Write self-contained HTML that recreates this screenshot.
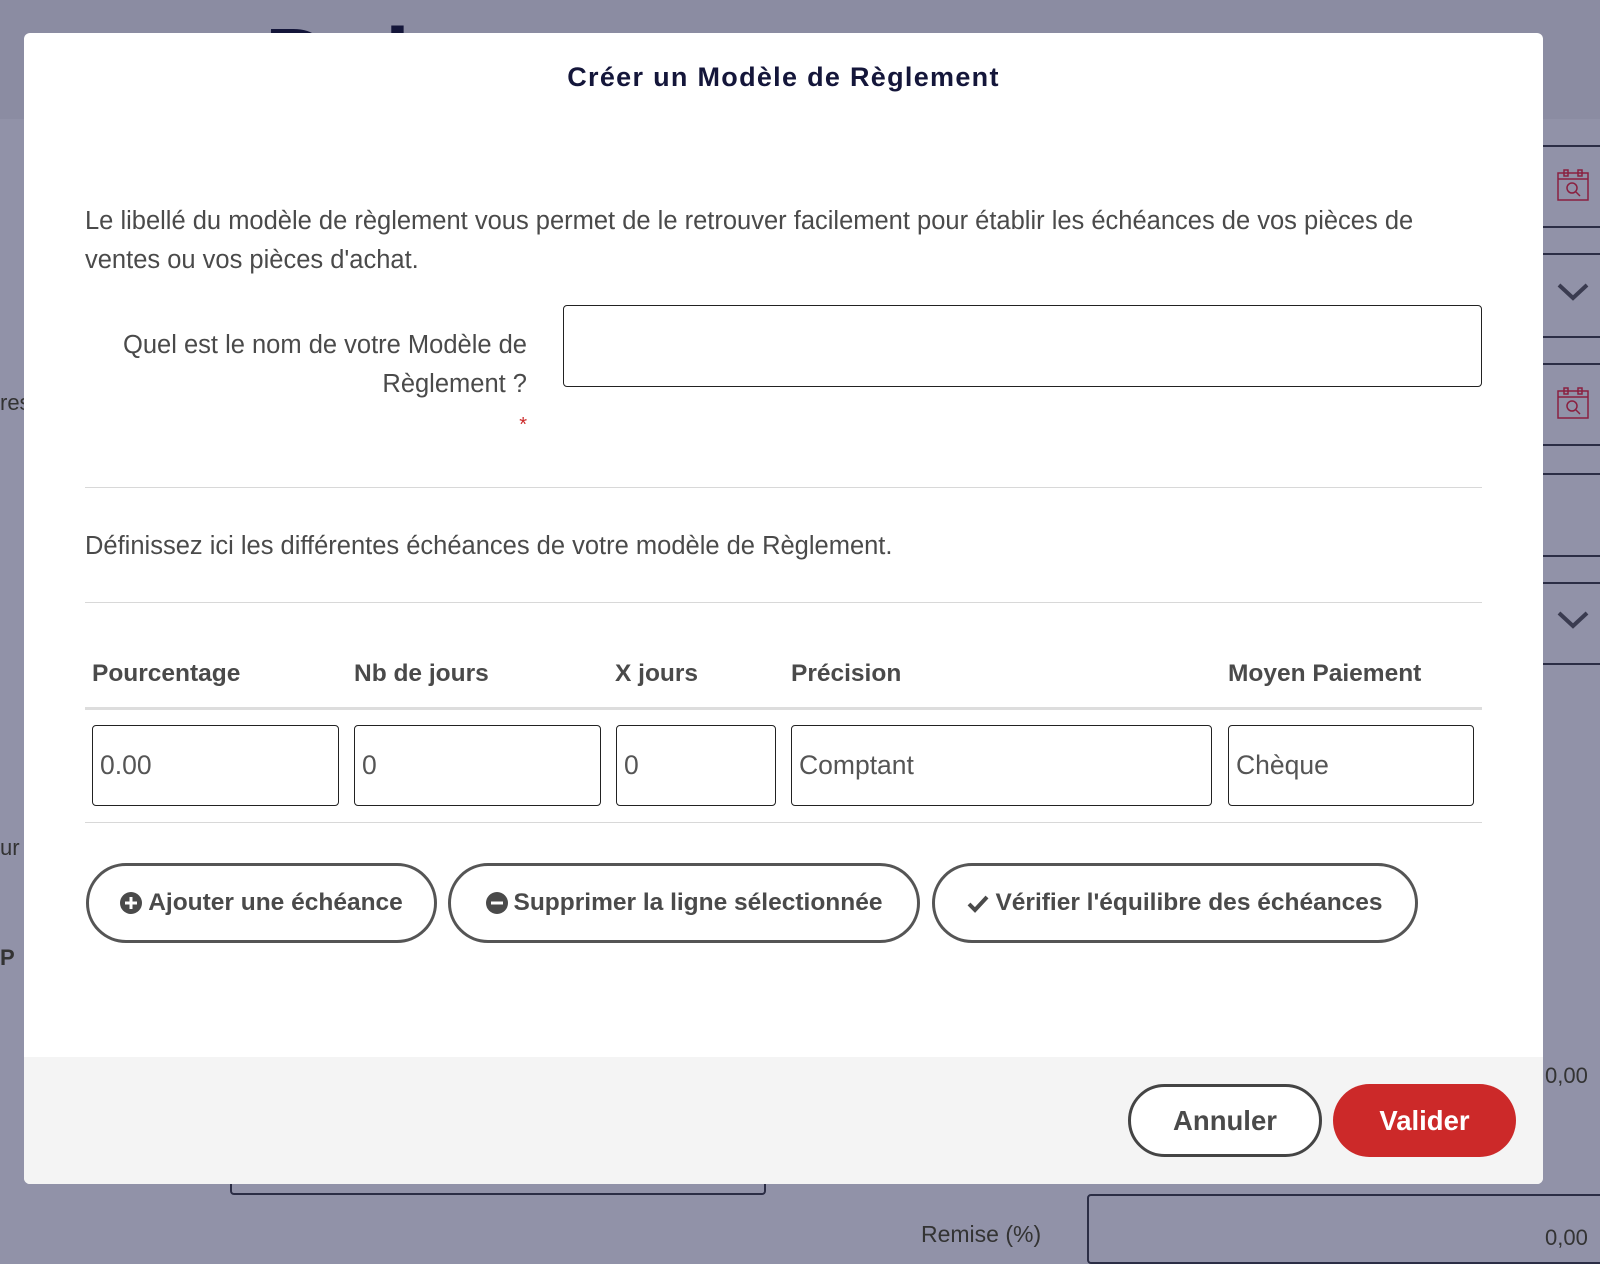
<!DOCTYPE html>
<html><head><meta charset="utf-8"><style>
*{box-sizing:border-box;margin:0;padding:0}
body{width:1600px;height:1254px;background:#9192a8;position:relative;overflow:hidden;font-family:"Liberation Sans",sans-serif;color:#444}
.abs{position:absolute}
.hl{position:absolute;height:2px;background:#2b2d45}
.modal{position:absolute;left:24px;top:33px;width:1519px;height:1151px;background:#fff;border-radius:6px;overflow:hidden}
.title{position:absolute;top:29px;left:0;width:100%;text-align:center;font-weight:bold;font-size:27px;letter-spacing:1.3px;color:#14163a}
.p{position:absolute;font-size:25.5px;color:#4a4a4a;line-height:39px;white-space:nowrap}
.hr{position:absolute;left:61px;width:1397px;height:1px;background:#d8d8d8}
.inp{position:absolute;border:1.5px solid #222;border-radius:4px;background:#fff;font-size:26.5px;color:#555;padding-left:7px;display:flex;align-items:center}
.th{position:absolute;font-weight:bold;font-size:24.5px;color:#4a4a4a;top:627px}
.btn{position:absolute;top:830px;height:80px;border:3px solid #555;border-radius:40px;font-weight:bold;font-size:24.5px;color:#4a4a4a;display:flex;align-items:center;justify-content:center;gap:6px;white-space:nowrap}
.foot{position:absolute;left:0;top:1024px;width:100%;height:127px;background:#f4f4f4}
</style></head><body>
<div class="abs" style="left:0;top:0;width:1600px;height:119px;background:#8b8ca2"></div>
<div class="abs" style="left:265px;top:10px;font-size:90px;font-weight:bold;color:#14163a">Dui</div>
<div class="hl" style="left:1543px;top:145px;width:57px"></div>
<div class="hl" style="left:1543px;top:226px;width:57px"></div>
<div class="hl" style="left:1543px;top:253px;width:57px"></div>
<div class="hl" style="left:1543px;top:336px;width:57px"></div>
<div class="hl" style="left:1543px;top:363px;width:57px"></div>
<div class="hl" style="left:1543px;top:444px;width:57px"></div>
<div class="hl" style="left:1543px;top:473px;width:57px"></div>
<div class="hl" style="left:1543px;top:555px;width:57px"></div>
<div class="hl" style="left:1543px;top:582px;width:57px"></div>
<div class="hl" style="left:1543px;top:663px;width:57px"></div>
<svg class="abs" style="left:1556px;top:168px" width="34" height="34" viewBox="0 0 34 34" fill="none" stroke="#8a2040" stroke-width="1.5"><rect x="2" y="5" width="30" height="27"/><line x1="2" y1="11" x2="32" y2="11"/><rect x="8" y="2" width="4" height="6"/><rect x="22" y="2" width="4" height="6"/><circle cx="16" cy="20" r="5"/><line x1="20" y1="24" x2="24" y2="28"/></svg>
<svg class="abs" style="left:1556px;top:386px" width="34" height="34" viewBox="0 0 34 34" fill="none" stroke="#8a2040" stroke-width="1.5"><rect x="2" y="5" width="30" height="27"/><line x1="2" y1="11" x2="32" y2="11"/><rect x="8" y="2" width="4" height="6"/><rect x="22" y="2" width="4" height="6"/><circle cx="16" cy="20" r="5"/><line x1="20" y1="24" x2="24" y2="28"/></svg>
<svg class="abs" style="left:1556px;top:282px" width="34" height="20" viewBox="0 0 34 20" fill="none" stroke="#3a3b50" stroke-width="4"><polyline points="3,3 17,16 31,3"/></svg>
<svg class="abs" style="left:1556px;top:610px" width="34" height="20" viewBox="0 0 34 20" fill="none" stroke="#3a3b50" stroke-width="4"><polyline points="3,3 17,16 31,3"/></svg>
<div class="abs" style="left:0;top:390px;font-size:22px;color:#333">res</div>
<div class="abs" style="left:0;top:835px;font-size:22px;color:#333">ur</div>
<div class="abs" style="left:0;top:945px;font-size:22px;font-weight:bold;color:#333">P</div>
<div class="abs" style="left:921px;top:1221px;font-size:23px;color:#333">Remise (%)</div>
<div class="abs" style="left:1545px;top:1063px;font-size:22px;color:#333">0,00</div>
<div class="abs" style="left:1545px;top:1225px;font-size:22px;color:#333">0,00</div>
<div class="abs" style="left:1087px;top:1194px;width:530px;height:70px;border:2px solid #2b2d45;border-radius:4px"></div>
<div class="abs" style="left:230px;top:1170px;width:536px;height:25px;border:2px solid #2b2d45;border-top:none;border-radius:0 0 4px 4px"></div>

<div class="modal">
<div class="title">Créer un Modèle de Règlement</div>
<div class="p" style="left:61px;top:169px;width:1400px">Le libellé du modèle de règlement vous permet de le retrouver facilement pour établir les échéances de vos pièces de<br>ventes ou vos pièces d'achat.</div>
<div class="p" style="left:61px;top:293px;width:442px;text-align:right">Quel est le nom de votre Modèle de<br>Règlement ?<br><span style="color:#cc2929;font-size:20px">*</span></div>
<div class="inp" style="left:539px;top:272px;width:919px;height:82px"></div>
<div class="hr" style="top:454px"></div>
<div class="p" style="left:61px;top:494px">Définissez ici les différentes échéances de votre modèle de Règlement.</div>
<div class="hr" style="top:569px"></div>
<div class="th" style="left:68px">Pourcentage</div>
<div class="th" style="left:330px">Nb de jours</div>
<div class="th" style="left:591px">X jours</div>
<div class="th" style="left:767px">Précision</div>
<div class="th" style="left:1204px">Moyen Paiement</div>
<div class="hr" style="top:674px;height:3px;background:#ddd"></div>
<div class="inp" style="left:68px;top:692px;width:247px;height:81px">0.00</div>
<div class="inp" style="left:330px;top:692px;width:247px;height:81px">0</div>
<div class="inp" style="left:592px;top:692px;width:160px;height:81px">0</div>
<div class="inp" style="left:767px;top:692px;width:421px;height:81px">Comptant</div>
<div class="inp" style="left:1204px;top:692px;width:246px;height:81px">Chèque</div>
<div class="hr" style="top:789px"></div>
<div class="btn" style="left:62px;width:351px"><svg width="22" height="22" viewBox="0 0 22 22"><circle cx="11" cy="11" r="11" fill="#4a4a4a"/><path d="M11 5v12M5 11h12" stroke="#fff" stroke-width="3"/></svg>Ajouter une échéance</div>
<div class="btn" style="left:424px;width:472px"><svg width="22" height="22" viewBox="0 0 22 22"><circle cx="11" cy="11" r="11" fill="#4a4a4a"/><path d="M5 11h12" stroke="#fff" stroke-width="3"/></svg>Supprimer la ligne sélectionnée</div>
<div class="btn" style="left:908px;width:486px"><svg width="22" height="20" viewBox="0 0 22 20"><path d="M2 11l6 6L20 4" stroke="#4a4a4a" stroke-width="4" fill="none"/></svg>Vérifier l'équilibre des échéances</div>
<div class="foot">
<div class="btn" style="left:1104px;top:27px;width:194px;height:73px;border-color:#444;font-size:27.5px;background:#fff">Annuler</div>
<div class="btn" style="left:1309px;top:27px;width:183px;height:73px;border:none;background:#cc2929;color:#fff;font-size:27.5px">Valider</div>
</div>
</div>
</body></html>
